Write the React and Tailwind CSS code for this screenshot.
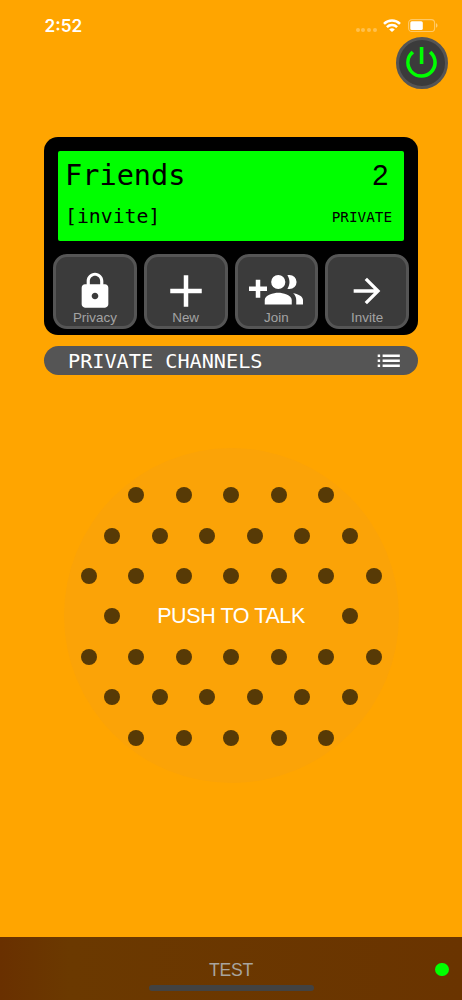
import { useState } from 'react'

const ICONS = {
  power:
    'M13.1 2.9h-2.1v10h2.1V3zm4.73 2.2l-1.52 1.52A6.8 6.8 0 0 1 18.9 12c0 3.8-3.08 6.9-6.9 6.9A6.9 6.9 0 0 1 7.68 6.62L6.17 5.1A8.932 8.932 0 0 0 3 12a9 9 0 0 0 18 0c0-2.74-1.23-5.18-3.17-6.9z',
  lock:
    'M18 8h-1V6c0-2.76-2.24-5-5-5S7 3.24 7 6v2H6c-1.1 0-2 .9-2 2v10c0 1.1.9 2 2 2h12c1.1 0 2-.9 2-2V10c0-1.1-.9-2-2-2zm-6 9c-1.1 0-2-.9-2-2s.9-2 2-2 2 .9 2 2-.9 2-2 2zm3.1-9H8.9V6c0-1.71 1.39-3.1 3.1-3.1 1.71 0 3.1 1.39 3.1 3.1v2z',
  add: 'M19 13h-6v6h-2v-6H5v-2h6V5h2v6h6v2z',
  groupAdd:
    'M8 10H5V7H3v3H0v2h3v3h2v-3h3v-2zm10 1.15a3.15 3.15 0 0 0 0-6.3c-.34 0-.66.05-.96.15.6.85.95 1.88.95 3s-.35 2.15-.95 3c.3.1.62.15.96.15zm-5 0a3.15 3.15 0 1 0 0-6.3 3.15 3.15 0 0 0 0 6.3zm6.62 1.85c.83.73 1.38 1.82 1.38 3v2h3v-2c0-1.7-2.37-2.7-4.38-3zM13 12.8c-2 0-6 1-6 3.2v2h12v-2c0-2.2-4-3.2-6-3.2z',
  arrow: 'M12 4l-1.41 1.41L16.17 11H4v2h12.17l-5.58 5.59L12 20l8-8z',
  list: 'M3 13h2v-2H3v2zm0 4h2v-2H3v2zm0-8h2V7H3v2zm4 4h14v-2H7v2zm0 4h14v-2H7v2zM7 7v2h14V7H7z',
}

const ACTIONS = [
  { label: 'Privacy', icon: 'lock', size: 'size-10' },
  { label: 'New', icon: 'add', size: 'size-[54px]' },
  { label: 'Join', icon: 'groupAdd', size: 'size-[54px]' },
  { label: 'Invite', icon: 'arrow', size: 'size-10' },
]

function Icon({ name, className }) {
  return (
    <svg viewBox="0 0 24 24" fill="currentColor" className={className}>
      <path d={ICONS[name]} />
    </svg>
  )
}

function StatusBar() {
  return (
    <div className="flex h-[37px] justify-between pt-[15px] pr-6 pl-[44.5px] text-white">
      <span className="font-[Inter,sans-serif] text-[17.2px] leading-[22px] font-semibold">2:52</span>
      <div className="flex h-[22px] items-center">
        <div className="mt-2 mr-[6px] flex gap-[1.8px]">
          {[0, 1, 2, 3].map((i) => (
            <span key={i} className="size-[4px] rounded-full bg-white/30" />
          ))}
        </div>
        <svg width="18" height="13" viewBox="0 0 18 13" className="mr-[7px] -mt-[2px]" fill="none" stroke="#fff" strokeWidth="2.5">
          <path d="M1 4.9a11.3 11.3 0 0 1 16 0" />
          <path d="M3.9 8.2a7.2 7.2 0 0 1 10.2 0" />
          <path d="M9 13 6.2 10.5a4 4 0 0 1 5.6 0z" fill="#fff" stroke="none" />
        </svg>
        <svg width="30" height="13" viewBox="0 0 30 13" className="-mt-[2px]">
          <rect x=".6" y=".6" width="26" height="12" rx="3.4" fill="none" stroke="#fff" strokeOpacity=".4" strokeWidth="1.1" />
          <rect x="2.3" y="2.2" width="12.5" height="8.8" rx="1.6" fill="#fff" />
          <path d="M28 4.3c1 .4 1.5 1.2 1.5 2.2S29 8.3 28 8.7z" fill="#fff" fillOpacity=".45" />
        </svg>
      </div>
    </div>
  )
}

function ActionButton({ label, icon, size }) {
  return (
    <button className="grid h-[75px] place-items-center rounded-[14px] border-[3.5px] border-[#555] bg-[#3b3b3b] text-white">
      <Icon name={icon} className={`${size} col-start-1 row-start-1 mb-[1px]`} />
      <span className="col-start-1 row-start-1 self-end text-[13.4px] leading-[17px] text-[#a3a3a3]">
        {label}
      </span>
    </button>
  )
}

function DotRow({ count }) {
  return (
    <div className="flex gap-[31.5px]">
      {Array.from({ length: count }, (_, i) => (
        <Dot key={i} />
      ))}
    </div>
  )
}

function Dot() {
  return <span className="size-4 rounded-full bg-[#573a06]" />
}

export default function App() {
  const [on, setOn] = useState(true)

  return (
    <div className="flex h-[1000px] w-[462px] flex-col overflow-hidden bg-[#ffa500] font-['Liberation_Sans',Arial,sans-serif]">
      <StatusBar />

      <div className="flex justify-end pr-[14.5px]">
        <button
          onClick={() => setOn(!on)}
          className="flex size-[51.5px] items-center justify-center rounded-full border-3 border-[#555] bg-[#3b3b3b]"
        >
          <Icon name="power" className={on ? 'size-[41px] shrink-0 text-[#00ff00]' : 'size-[41px] shrink-0 text-gray-500'} />
        </button>
      </div>

      {/* Radio panel */}
      <div className="mx-11 mt-12 h-[198.5px] rounded-[14px] bg-black px-[9px] pt-[14.5px]">
        <div className="mx-[5px] flex h-[89.5px] flex-col rounded-[2px] bg-[#00ff00] pr-[12px] pl-[7px] text-black">
          <div className="flex items-center justify-between pt-[5.5px]">
            <span className="font-['DejaVu_Sans_Mono',monospace] text-[28.6px] leading-9">Friends</span>
            <span className="pr-[3.5px] text-[29px] leading-9">2</span>
          </div>
          <div className="mt-3 flex items-center justify-between font-['DejaVu_Sans_Mono',monospace]">
            <span className="text-[19.8px] leading-6">[invite]</span>
            <span className="text-[14.3px] leading-6">PRIVATE</span>
          </div>
        </div>
        <div className="mt-[13.5px] grid grid-cols-4 gap-[7px]">
          {ACTIONS.map((a) => (
            <ActionButton key={a.label} {...a} />
          ))}
        </div>
      </div>

      {/* Channel list */}
      <div className="mx-11 mt-[11px] flex h-[29px] items-center justify-between rounded-full bg-[#555] pr-[14.5px] pl-6 text-white">
        <span className="font-['DejaVu_Sans_Mono',monospace] text-[20.2px] leading-7">PRIVATE CHANNELS</span>
        <Icon name="list" className="size-[29.5px]" />
      </div>

      {/* Push to talk */}
      <button className="mx-auto mt-[73px] flex size-[335px] flex-col items-center gap-[24.4px] rounded-full bg-[#fba307] pt-[39.3px]">
        <DotRow count={5} />
        <DotRow count={6} />
        <DotRow count={7} />
        <div className="flex h-4 w-[253.5px] items-center justify-between">
          <Dot />
          <span className="text-[21.5px] leading-4 tracking-[-0.4px] whitespace-nowrap text-white">PUSH TO TALK</span>
          <Dot />
        </div>
        <DotRow count={7} />
        <DotRow count={6} />
        <DotRow count={5} />
      </button>

      <footer className="mt-auto grid h-[63px] grid-cols-[1fr_auto_1fr] items-center bg-linear-to-r from-[#693000] via-[#6b3900] via-15% to-[#6a3400]">
        <span className="col-start-2 row-start-1 mt-0.5 text-[17.6px] leading-5 tracking-[-0.3px] text-[#a8a49f]">TEST</span>
        <span className="col-start-3 row-start-1 mt-0.5 mr-[13.5px] size-[13.5px] justify-self-end rounded-full bg-[#00ff00]" />
        <span className="col-span-3 col-start-1 row-start-1 mb-[9.5px] h-[5.5px] w-[165px] self-end justify-self-center rounded-full bg-[#424242]" />
      </footer>
    </div>
  )
}
